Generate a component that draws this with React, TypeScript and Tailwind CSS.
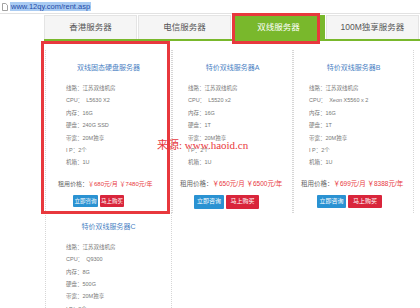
const tabs = [
  { label: '香港服务器', active: false },
  { label: '电信服务器', active: false },
  { label: '双线服务器', active: true },
  { label: '100M独享服务器', active: false },
]

const cards = [
  {
    title: '双线固态硬盘服务器',
    width: 'w-[127px]',
    specPad: 'pl-[20px]',
    pricePad: 'pl-[12px] text-[6px]',
    btnPad: 'pl-[27px]',
    btn: 'w-[25px] h-[12px] text-[5.5px]',
    btn2: 'w-[24px] h-[12px] text-[5.5px]',
    specs: ['线路：江苏双线机房', 'CPU：  L5630 X2', '内存：16G', '硬盘：240G SSD', '带宽：20M独享', 'I P：2个', '机箱：1U'],
    month: '￥680元/月',
    year: '￥7480元/年',
  },
  {
    title: '特价双线服务器A',
    width: 'w-[121px]',
    specPad: 'pl-[15px]',
    pricePad: 'pl-[7px] text-[6.5px]',
    btnPad: 'pl-[21px]',
    btn: 'w-[30px] h-[14px] text-[6px]',
    btn2: 'w-[33px] h-[14px] text-[6px]',
    specs: ['线路：江苏双线机房', 'CPU：  L5520 x2', '内存：16G', '硬盘：1T', '带宽：20M独享', 'I P：2个', '机箱：1U'],
    month: '￥650元/月',
    year: '￥6500元/年',
  },
  {
    title: '特价双线服务器B',
    width: 'w-[121px]',
    specPad: 'pl-[15px]',
    pricePad: 'pl-[7px] text-[6.5px]',
    btnPad: 'pl-[23px]',
    btn: 'w-[29px] h-[13px] text-[6px]',
    btn2: 'w-[34px] h-[13px] text-[6px]',
    specs: ['线路：江苏双线机房', 'CPU：  Xeon X5560 x 2', '内存：16G', '硬盘：1T', '带宽：20M独享', 'I P：2个', '机箱：1U'],
    month: '￥699元/月',
    year: '￥8388元/年',
  },
]

const cardC = {
  title: '特价双线服务器C',
  specs: ['线路：江苏双线机房', 'CPU：  Q9300', '内存：8G', '硬盘：500G', '带宽：20M独享', 'I P：2个', '机箱：1U'],
}

function Specs({ items, pad }: { items: string[]; pad: string }) {
  return (
    <ul className={`mt-[9px] ${pad} text-[5.5px] leading-[12.4px] text-[#777] whitespace-pre`}>
      {items.map((s) => (
        <li key={s}>{s}</li>
      ))}
    </ul>
  )
}

export default function App() {
  return (
    <div className="relative w-[420px] h-[308px] overflow-hidden bg-white font-['Liberation_Sans','Noto_Sans_CJK_SC',sans-serif]">
      {/* address bar */}
      <div className="flex h-[14px] items-center border-b border-[#e2e2e2] pl-[2px]">
        <svg width="6" height="8" viewBox="0 0 6 8" className="shrink-0">
          <path d="M0.5 0.5h3.2l1.8 1.8v5.2h-5z" fill="#fff" stroke="#8a8a8a" strokeWidth="0.8" />
        </svg>
        <span className="ml-[2px] bg-[#a9cbf2] px-[1px] text-[7.5px] leading-[9px] text-[#1f4aa8]">
          www.12qy.com/rent.asp
        </span>
      </div>

      {/* tabs */}
      <div className="mt-[1px] ml-[44px] flex h-[24px] gap-[1px]">
        {tabs.map((t) =>
          t.active ? (
            <div key={t.label} className="flex w-[93px] items-center justify-center bg-[#79b82c] text-[8.5px] text-white">
              {t.label}
            </div>
          ) : (
            <div
              key={t.label}
              className="flex w-[93px] items-center justify-center border border-b-0 border-[#e4e4e4] bg-[#f5f5f5] text-[8.5px] text-[#555]"
            >
              {t.label}
            </div>
          )
        )}
      </div>
      <div className="ml-[44px] h-[2px] bg-[#79b82c]" />

      {/* first row of cards */}
      <div className="flex pl-[45px]">
        {cards.map((c) => (
          <div key={c.title} className={`${c.width} mt-[9px] border-x border-dotted border-[#d6d6d6] pt-[13px] pb-[4px]`}>
            <h3 className="text-center text-[7px] leading-[10px] text-[#4a7fc3]">{c.title}</h3>
            <Specs items={c.specs} pad={c.specPad} />
            <p className={`mt-[10px] ${c.pricePad} leading-[10px] whitespace-nowrap text-[#666]`}>
              租用价格：<span className="text-[#e8373d]">{c.month}  {c.year}</span>
            </p>
            <div className={`mt-[6px] flex gap-[2px] ${c.btnPad}`}>
              <span className={`${c.btn} flex items-center justify-center rounded-[1px] bg-[#2a92d2] text-white`}>立即咨询</span>
              <span className={`${c.btn2} flex items-center justify-center rounded-[1px] bg-[#d9253b] text-white`}>马上购买</span>
            </div>
          </div>
        ))}
      </div>

      {/* second row */}
      <div className="flex pl-[45px]">
        <div className="w-[127px] border-x border-dotted border-[#d6d6d6] pt-[9px] pb-[10px]">
          <h3 className="text-center text-[7px] leading-[10px] text-[#4a7fc3]">{cardC.title}</h3>
          <Specs items={cardC.specs} pad="pl-[20px]" />
        </div>
      </div>

      {/* annotation boxes */}
      <div className="absolute left-[232px] top-[13px] h-[31px] w-[88px] border-[3px] border-[#e8383d]" />
      <div className="absolute left-[41px] top-[41px] h-[173px] w-[129px] border-[3px] border-[#e8383d]" />

      {/* watermark */}
      <div className="absolute left-[157px] top-[138px] text-[11px] leading-[14px] whitespace-nowrap text-[#e8383d] font-['Liberation_Serif','Noto_Sans_CJK_SC',serif]">
        来源: www.haoid.cn
      </div>
    </div>
  )
}
